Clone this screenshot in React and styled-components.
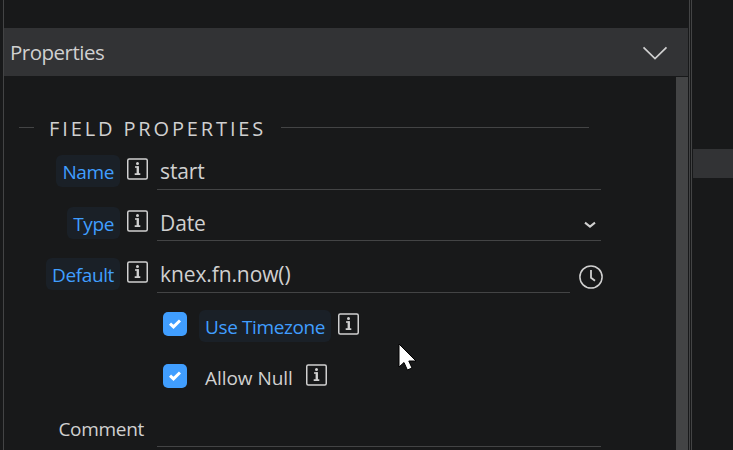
import styled, { createGlobalStyle } from "styled-components";

const GlobalStyle = createGlobalStyle`
  * {
    box-sizing: border-box;
  }

  body {
    margin: 0;
    overflow: hidden;
    background: #18191a;
    color: #d0d0d0;
    font-family: "Segoe UI", "Open Sans", "Noto Sans", sans-serif;
  }
`;

const Window = styled.div`
  display: flex;
  position: relative;
  width: 733px;
  height: 450px;
  padding-left: 3px;
  overflow: hidden;
`;

const Panel = styled.section`
  display: flex;
  flex-direction: column;
  width: 687px;
  padding: 28px 1px 0 0;
  border-left: 1px solid #434445;
  border-right: 1px solid #434445;
`;

const Header = styled.header`
  display: flex;
  align-items: center;
  justify-content: space-between;
  flex: none;
  height: 48px;
  padding: 2px 20px 0 6px;
  background: #323335;
`;

const Title = styled.h2`
  margin: 0 0 2px;
  font-size: 20.5px;
  font-weight: 400;
  line-height: 28px;
  letter-spacing: -0.5px;
`;

const Body = styled.div`
  display: flex;
  flex: 1;
  justify-content: space-between;
  margin-top: 1px;
`;

const Scrollbar = styled.div`
  width: 12px;
  background: #434445;
`;

const Fields = styled.div`
  width: 600px;
  padding-top: 37px;
`;

const Legend = styled.div`
  display: flex;
  align-items: center;
  height: 28px;
  margin: 0 15px 13px;
`;

const Rule = styled.span`
  width: ${(props) => props.$width};
  height: 1px;
  margin-bottom: 1px;
  background: #434445;
`;

const LegendText = styled.span`
  width: 247px;
  padding: 2px 0 0 15px;
  font-size: 20px;
  line-height: 28px;
  letter-spacing: 2.87px;
  white-space: nowrap;
`;

const Row = styled.div`
  display: flex;
  align-items: flex-start;
  height: 52px;

  &:nth-child(odd) {
    height: 51px;
  }
`;

const LabelCell = styled.div`
  display: flex;
  flex: none;
  justify-content: flex-end;
  width: 116px;
`;

const WideLabelCell = styled(LabelCell)`
  width: 146px;
  margin: -1px 7px 0 0;
`;

const Label = styled.span`
  height: 32px;
  padding: 0 6px;
  border-radius: 6px;
  background: ${(props) => (props.$changed ? "#1a2027" : "transparent")};
  color: ${(props) => (props.$changed ? "#409eff" : "inherit")};
  font-size: 19px;
  line-height: 34px;
  letter-spacing: ${(props) => props.$spacing || "-0.38px"};
  white-space: nowrap;
`;

const InfoIcon = styled.svg`
  flex: none;
  width: 21px;
  height: 22px;
  margin: 3px 9px 0 7px;
`;

const Control = styled.div`
  display: flex;
  flex: none;
  justify-content: space-between;
  width: ${(props) => props.$width || "444px"};
  height: 35px;
  padding: 0 5px 0 3px;
  border-bottom: 1px solid #434445;
  font-size: 21px;
  line-height: 32px;
  letter-spacing: -0.1px;

  ${Row}:nth-child(odd) & {
    height: 34px;
  }
`;

const SelectArrow = styled.svg`
  width: 12px;
  height: 8px;
  margin-top: 14px;
`;

const ClockIcon = styled.svg`
  flex: none;
  width: 24px;
  height: 24px;
  margin: 7px 0 0 9px;
`;

const CheckRow = styled(Row)`
  padding-left: 159px;
`;

const Checkbox = styled.span`
  display: flex;
  align-items: center;
  justify-content: center;
  width: 24px;
  height: 24px;
  margin: ${(props) => props.$top} 12px 0 0;
  border-radius: 5px;
  background: #409eff;
`;

const Sidebar = styled.aside`
  width: 42px;
  margin-left: 1px;
  padding: 149px 0 0 1px;
  border-left: 1px solid #434445;
`;

const SelectedItem = styled.div`
  height: 29px;
  background: #323335;
`;

const Cursor = styled.svg`
  position: absolute;
  left: 398px;
  top: 343px;
  width: 20px;
  height: 30px;
`;

function Info() {
  return (
    <InfoIcon viewBox="0 0 21 22" fill="none">
      <rect x="0.75" y="1" width="19.5" height="20" rx="1.5" stroke="#d0d0d0" strokeWidth="1.5" />
      <path d="M8 9h3v7M7.7 16.1h5.6" stroke="#d0d0d0" strokeWidth="1.6" />
      <path d="M10.7 8.3v8" stroke="#d0d0d0" strokeWidth="2.2" />
      <circle cx="10.5" cy="5.4" r="1.5" fill="#d0d0d0" />
    </InfoIcon>
  );
}

function Check({ top }) {
  return (
    <Checkbox $top={top}>
      <svg width="12" height="10" viewBox="0 0 12 10" fill="none">
        <path d="M1 4.6l3.5 3.3L11 1.5" stroke="#fff" strokeWidth="3" />
      </svg>
    </Checkbox>
  );
}

function App() {
  return (
    <Window>
      <GlobalStyle />
      <Panel>
        <Header>
          <Title>Properties</Title>
          <svg width="26" height="16" viewBox="0 0 26 16" fill="none">
            <path d="M1.5 2.4L13 13.6 24.5 2.4" stroke="#d0d0d0" strokeWidth="1.7" />
          </svg>
        </Header>
        <Body>
          <Fields>
            <Legend>
              <Rule $width="15px" />
              <LegendText>FIELD PROPERTIES</LegendText>
              <Rule $width="308px" />
            </Legend>
            <Row>
              <LabelCell><Label $changed>Name</Label></LabelCell>
              <Info />
              <Control>start</Control>
            </Row>
            <Row>
              <LabelCell><Label $changed>Type</Label></LabelCell>
              <Info />
              <Control>
                Date
                <SelectArrow viewBox="0 0 12 8" fill="none">
                  <path d="M1 1.6l5 4 5-4" stroke="#d0d0d0" strokeWidth="2" />
                </SelectArrow>
              </Control>
            </Row>
            <Row>
              <LabelCell><Label $changed>Default</Label></LabelCell>
              <Info />
              <Control $width="413px">knex.fn.now()</Control>
              <ClockIcon viewBox="0 0 24 24" fill="none" stroke="#d0d0d0">
                <circle cx="12" cy="12" r="11.1" strokeWidth="1.5" />
                <path d="M12 5v7.8l4 3" strokeWidth="1.8" />
              </ClockIcon>
            </Row>
            <CheckRow>
              <Check top="2px" />
              <Label $changed>Use Timezone</Label>
              <Info />
            </CheckRow>
            <CheckRow>
              <Check top="3px" />
              <Label $spacing="-0.05px">Allow Null</Label>
              <Info />
            </CheckRow>
            <Row>
              <WideLabelCell><Label $spacing="-0.3px">Comment</Label></WideLabelCell>
              <Control />
            </Row>
          </Fields>
          <Scrollbar />
        </Body>
      </Panel>
      <Sidebar>
        <SelectedItem />
      </Sidebar>
      <Cursor viewBox="0 0 20 30">
        <path d="M1 1v23l5-4.5 3.4 7.5 4.6-2-3.2-7H18z" fill="#fff" stroke="#000" strokeWidth="1" />
      </Cursor>
    </Window>
  );
}

export default App;
